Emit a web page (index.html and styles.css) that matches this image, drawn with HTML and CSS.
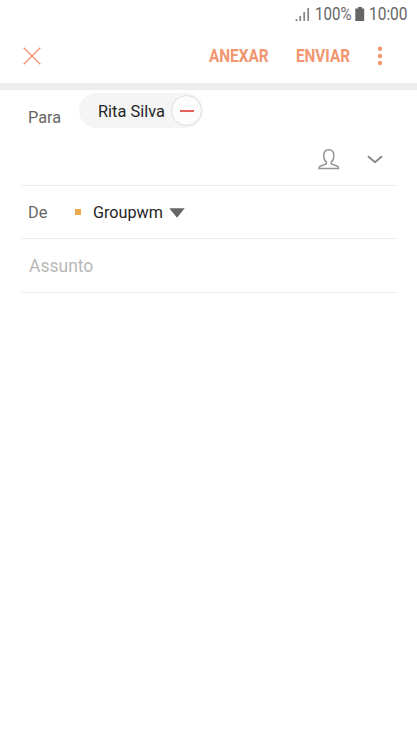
FILE: index.html
```html
<!DOCTYPE html>
<html lang="pt">
<head>
<meta charset="utf-8">
<title>Nova mensagem</title>
<link rel="stylesheet" href="styles.css">
</head>
<body>
<div class="status">
  <svg class="signal" width="16" height="15" viewBox="0 0 16 15"><path d="M1.5 12v2M5.2 9v5M9.2 5v9M13.2 1v13" stroke="#858585" stroke-width="1.7"/></svg>
  <svg class="pct" width="38" height="26"><text x="0" y="19" textLength="36.5" lengthAdjust="spacingAndGlyphs">100%</text></svg>
  <svg class="battery" width="10" height="14" viewBox="0 0 10 14"><path d="M3 0h4v1.5h2.2V14H.3V1.5H3z" fill="#666"/></svg>
  <svg class="clock" width="42" height="26"><text x="0" y="19" textLength="38.5" lengthAdjust="spacingAndGlyphs">10:00</text></svg>
</div>
<header class="toolbar">
  <svg class="close" width="18" height="18" viewBox="0 0 18 18"><path d="M.7.7l16.6 16.6M17.3.7L.7 17.3" stroke="#f1966f" stroke-width="1.4"/></svg>
  <svg class="action attach" width="62" height="28"><text x="0" y="20" textLength="59.5" lengthAdjust="spacingAndGlyphs">ANEXAR</text></svg>
  <svg class="action" width="57" height="28"><text x="0" y="20" textLength="54" lengthAdjust="spacingAndGlyphs">ENVIAR</text></svg>
  <svg class="more" width="6" height="20" viewBox="0 0 6 20"><g fill="#f1966f"><circle cx="3" cy="2.8" r="2.2"/><circle cx="3" cy="10" r="2.2"/><circle cx="3" cy="17" r="2.2"/></g></svg>
</header>
<main class="form">
  <section class="to">
    <div class="recipients">
      <span class="label">Para</span>
      <div class="chip"><span>Rita Silva</span><i class="remove"></i></div>
    </div>
    <div class="tools">
      <svg width="22" height="22" viewBox="0 0 23 22" fill="none" stroke="#949494" stroke-width="1.5"><path d="M8.8 14.3C6.9 12.7 6 10.5 6 7.5 6 3.6 8 1.3 11.3 1.3s5.3 2.3 5.3 6.2c0 3-.9 5.2-2.8 6.8-.5 1.3.1 2 1.6 2.5l3.8 1.2c1.6.5 2.4 1.4 2.4 2.9H1c0-1.5.8-2.4 2.4-2.9l3.8-1.2c1.5-.5 2.1-1.2 1.6-2.5z"/></svg>
      <svg class="chevron" width="16" height="9" viewBox="0 0 16 9" fill="none" stroke="#8b8b8b" stroke-width="2"><path d="M1 1.2l7 6 7-6"/></svg>
    </div>
  </section>
  <section class="from">
    <span class="label">De</span>
    <i class="dot"></i>
    <span class="account">Groupwm</span>
    <svg class="arrow" width="16" height="10" viewBox="0 0 16 10"><path d="M.3.2h15.4L8 9.8z" fill="#666"/></svg>
  </section>
  <section class="subject">Assunto</section>
</main>
</body>
</html>
```
FILE: styles.css
```css
* { box-sizing: border-box; }
body {
  margin: 0;
  background: #fff;
  font-family: Roboto, "Liberation Sans", sans-serif;
  font-size: 17px;
  line-height: 20px;
  color: #252525;
}
svg { display: block; flex: none; overflow: visible; }
.status { display: flex; height: 28px; padding: 5px 0 0 295px; }
.status text { font-size: 18px; fill: #666; }
.signal { margin-top: 2px; }
.pct { margin: -4px 0 0 4px; }
.battery { margin: 2px 0 0 2px; }
.clock { margin: -4px 0 0 4px; }
.toolbar {
  display: flex;
  align-items: center;
  height: 62px;
  padding-left: 23px;
  border-bottom: 7px solid #ededed;
}
.action text { font-size: 17.5px; font-weight: 700; fill: #f1966f; }
.attach { margin: 0 25px 0 168px; }
.more { margin-left: 24px; }
.form { padding: 0 20px 0 21px; }
.to { height: 96px; border-bottom: 1px solid #ececec; }
.recipients { display: flex; height: 55px; }
.label { width: 52px; padding-left: 7px; color: #666; font-size: 16.3px; }
.recipients .label { width: 58px; margin-top: 18px; }
.chip {
  display: flex;
  align-items: center;
  justify-content: space-between;
  width: 124px;
  height: 35px;
  margin-top: 3px;
  padding: 0 1px 0 19px;
  border-radius: 18px;
  background: #f5f5f5;
  font-size: 16.4px;
}
.chip span { padding-top: 2px; }
.remove {
  display: flex;
  align-items: center;
  justify-content: center;
  width: 31px;
  height: 31px;
  border: 1px solid #dce0e0;
  border-radius: 50%;
  background: #fcfcfc;
}
.remove::after { content: ""; width: 14px; height: 2px; background: #e5605a; }
.tools { display: flex; align-items: center; gap: 27px; height: 27px; padding-left: 297px; }
.chevron { margin-top: 1px; }
.from { display: flex; align-items: center; height: 53px; border-bottom: 1px solid #ececec; }
.from .label, .from .account { padding-top: 2px; }
.dot { width: 6px; height: 6px; margin: 0 12px 0 2px; background: #eaa94e; }
.from .account { font-size: 16.2px; }
.arrow { margin: 1px 0 0 6px; }
.subject { height: 54px; padding: 17px 0 0 8px; border-bottom: 1px solid #ececec; color: #b8b8b8; font-size: 17.5px; }
```
